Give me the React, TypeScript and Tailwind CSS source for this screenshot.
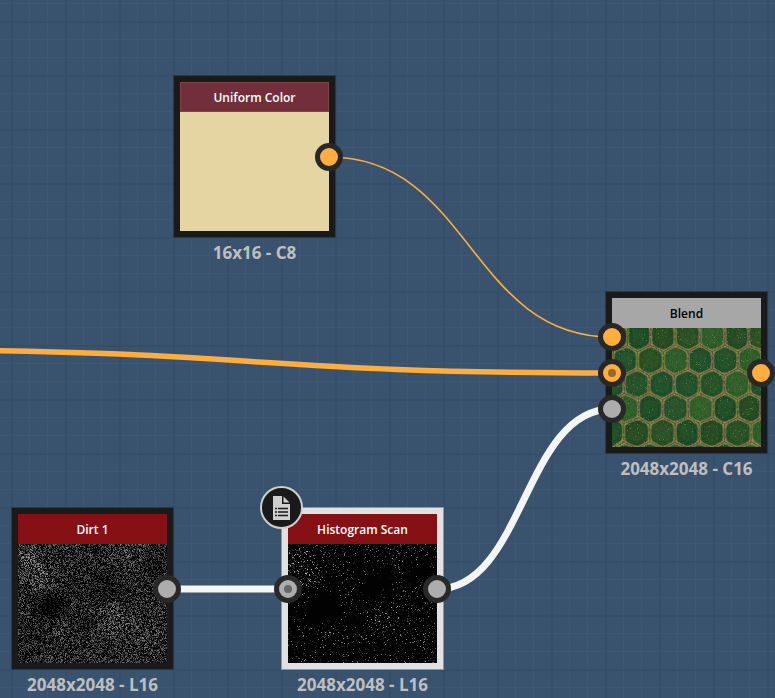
import type { ReactNode } from "react";

type Point = [number, number];

const THUMB = 149;

/* Small deterministic generator so the thumbnails look the same on every render. */
function makeRandom(seed: number) {
  let s = seed;
  return () => {
    s = (s + 0x6d2b79f5) | 0;
    let t = Math.imul(s ^ (s >>> 15), 1 | s);
    t = (t + Math.imul(t ^ (t >>> 7), 61 | t)) ^ t;
    return ((t ^ (t >>> 14)) >>> 0) / 4294967296;
  };
}

/* Cloud blobs: x, y, radius, strength (negative is darker). */
const CLOUDS: [number, number, number, number][] = [
  [8, 45, 18, 0.18],
  [22, 66, 11, 0.25],
  [33, 92, 15, -0.3],
  [96, 104, 15, 0.2],
  [42, 114, 10, 0.14],
  [112, 38, 18, 0.12],
  [128, 122, 14, 0.12],
  [132, 54, 14, -0.14],
  [86, 70, 20, -0.12],
  [64, 110, 12, -0.1],
  [10, 125, 16, -0.08],
];

function cloud(x: number, y: number) {
  let v = 0;
  for (const [cx, cy, r, k] of CLOUDS) {
    const d = ((x - cx) ** 2 + (y - cy) ** 2) / (r * r);
    v += k * Math.exp(-d);
  }
  return v;
}

function grain(seed: number, level: (r: number, q: number, c: number) => number) {
  const rnd = makeRandom(seed);
  const paths: string[] = Array(12).fill("");
  for (let y = 30; y < THUMB; y++) {
    for (let x = 0; x < THUMB; x++) {
      const v = Math.max(0, Math.min(0.99, level(rnd(), rnd(), cloud(x, y))));
      const bin = Math.floor(v * 12);
      if (bin > 0) paths[bin] += `M${x} ${y}h1v1h-1z`;
    }
  }
  return paths;
}

const DIRT = grain(7, (r, _q, c) => Math.pow(r, 2) * (0.46 + c) + c * 0.14);
const SCAN = grain(21, (r, q, c) => (r > 0.9 - c * 0.8 ? 0.09 + Math.pow(q, 2.6) * (0.5 + Math.max(0, c) * 1.5) : 0));

function Grain({ paths }: { paths: string[] }) {
  return (
    <svg className="block size-full" viewBox="0 0 149 149" shapeRendering="crispEdges" aria-hidden="true">
      <rect width="149" height="149" fill="#020202" />
      {paths.map((d, i) => {
        const g = Math.round(((i + 0.4) / 12) * 255);
        return d ? <path key={i} d={d} fill={`rgb(${g},${g},${g})`} /> : null;
      })}
    </svg>
  );
}

/* Scale cells: centres of each row, at three times the thumbnail's scale. */
const ROWS: { y: number; xs: number[] }[] = [
  { y: 40, xs: [30, 92, 166, 240, 315, 390, 465] },
  { y: 116, xs: [13, 80, 152, 227, 302, 375, 445] },
  { y: 186, xs: [-30, 38, 115, 193, 264, 339, 417, 480] },
  { y: 259, xs: [0, 73, 149, 225, 299, 375, 451] },
  { y: 331, xs: [-25, 45, 114, 190, 267, 340, 413, 480] },
  { y: 404, xs: [-3, 73, 153, 226, 297, 378, 457] },
  { y: 480, xs: [38, 114, 190, 264, 338, 415] },
];

const GREENS = ["#26502a", "#305d2c", "#1d4a28", "#214f2a", "#2a4e25", "#33602a", "#204f2e", "#264824"];

function voronoi(site: Point, sites: Point[]): Point[] {
  let poly: Point[] = [[-40, -40], [190, -40], [190, 190], [-40, 190]];
  for (const o of sites) {
    if (o === site) continue;
    const mx = (site[0] + o[0]) / 2;
    const my = (site[1] + o[1]) / 2;
    const dx = o[0] - site[0];
    const dy = o[1] - site[1];
    const side = (p: Point) => (p[0] - mx) * dx + (p[1] - my) * dy;
    const next: Point[] = [];
    poly.forEach((a, i) => {
      const b = poly[(i + 1) % poly.length];
      const sa = side(a);
      const sb = side(b);
      if (sa <= 0) next.push(a);
      if (sa < 0 !== sb < 0) {
        const t = sa / (sa - sb);
        next.push([a[0] + (b[0] - a[0]) * t, a[1] + (b[1] - a[1]) * t]);
      }
    });
    poly = next;
  }
  return poly;
}

function rounded(poly: Point[], c: Point, k: number) {
  const p = poly.map(([x, y]): Point => [c[0] + (x - c[0]) * k, c[1] + (y - c[1]) * k]);
  const mix = (a: Point, b: Point, t: number) =>
    `${(a[0] + (b[0] - a[0]) * t).toFixed(1)} ${(a[1] + (b[1] - a[1]) * t).toFixed(1)}`;
  return (
    p
      .map((v, i) => {
        const prev = p[(i + p.length - 1) % p.length];
        const next = p[(i + 1) % p.length];
        return `${i ? "L" : "M"}${mix(v, prev, 0.25)}Q${v[0].toFixed(1)} ${v[1].toFixed(1)} ${mix(v, next, 0.25)}`;
      })
      .join("") + "Z"
  );
}

const SITES: Point[] = ROWS.flatMap((r) => r.xs.map((x): Point => [x / 3, r.y / 3]));
const CELLS = SITES.map((s, i) => {
  const poly = voronoi(s, SITES);
  return {
    edge: "M" + poly.map((p) => `${p[0].toFixed(1)} ${p[1].toFixed(1)}`).join("L") + "Z",
    body: rounded(poly, s, 0.9),
    core: rounded(poly, s, 0.6),
    fill: GREENS[(i * 5 + (i >> 2)) % GREENS.length],
  };
});

const SPECKS = (() => {
  const rnd = makeRandom(3);
  const out = { dark: "", green: "", light: "" };
  for (let i = 0; i < 6000; i++) {
    const x = Math.floor(rnd() * THUMB);
    const y = 30 + Math.floor(rnd() * 119);
    const r = rnd();
    if (r < 0.55) out.dark += `M${x} ${y}h1v2h-1z`;
    else if (r < 0.95) out.green += `M${x} ${y}h1v1h-1z`;
    else out.light += `M${x} ${y}h1v1h-1z`;
  }
  return out;
})();

function Scales() {
  return (
    <svg className="block size-full" viewBox="0 0 149 149" aria-hidden="true">
      <rect width="149" height="149" fill="#8c8d48" />
      {CELLS.map((c, i) => (
        <g key={i}>
          <path d={c.body} fill={c.fill} stroke="#66793a" strokeWidth="1" />
          <path d={c.core} fill="#3f7a33" opacity="0.14" />
        </g>
      ))}
      {CELLS.map((c, i) => (
        <path key={i} d={c.edge} fill="none" stroke="#64404c" strokeWidth="0.7" strokeDasharray="7 2 4 1" />
      ))}
      <g shapeRendering="crispEdges">
        <path d={SPECKS.dark} fill="#0c2a12" opacity="0.15" />
        <path d={SPECKS.green} fill="#5d8a3c" opacity="0.18" />
        <path d={SPECKS.light} fill="#a9b560" opacity="0.4" />
      </g>
    </svg>
  );
}

type PortKind = "color" | "colorLinked" | "gray" | "grayLinked";

function Port({ kind, label, place }: { kind: PortKind; label: string; place: string }) {
  const color = kind.startsWith("color") ? "bg-[#ffad3f]" : "bg-[#adadad]";
  return (
    <button
      type="button"
      aria-label={label}
      className={`absolute flex size-7 items-center justify-center rounded-full border-5 border-[#282828] ${color} ${place}`}
    >
      {kind === "colorLinked" && <span className="size-2 rounded-full bg-[#99682a]" />}
      {kind === "grayLinked" && <span className="size-2 rounded-full bg-[#666666]" />}
    </button>
  );
}

interface NodeProps {
  title: string;
  caption: string;
  place: string;
  header: string;
  frame?: string;
  children: ReactNode;
  ports: ReactNode;
}

function GraphNode({ title, caption, place, header, frame = "border-[#1a1a1a] ring-[#1a1a1a]/40", children, ports }: NodeProps) {
  return (
    <article className={`absolute flex w-[161px] flex-col items-center ${place}`}>
      <div className={`relative size-[161px] border-6 ring-1 ${frame}`}>
        <div className="size-full">{children}</div>
        <h2 className={`absolute inset-x-0 top-0 flex h-[30px] items-center justify-center border pt-0.5 text-xs font-semibold ${header}`}>
          {title}
        </h2>
        {ports}
      </div>
      <p className="mt-1 text-[17px] leading-6 font-bold whitespace-nowrap text-[#bfbfbf]">{caption}</p>
    </article>
  );
}

function Wires() {
  return (
    <svg className="absolute inset-0 size-full" fill="none" aria-hidden="true">
      <defs>
        <pattern id="grid" x="11" y="21" width="54" height="54" patternUnits="userSpaceOnUse">
          <path d="M18.5 0V54M36.5 0V54M0 18.5H54M0 36.5H54" stroke="#3d5872" />
          <path d="M1 0V54M0 1H54" stroke="#354f6b" strokeWidth="2" />
        </pattern>
      </defs>
      <rect width="100%" height="100%" fill="url(#grid)" />
      <path d="M329 157C470 157 470 337 612 337" stroke="#ffad3f" strokeWidth="1.6" />
      <path d="M-110 350C251 350 251 373 612 373" stroke="#ffad3f" strokeWidth="5.5" />
      <path d="M761 373H800" stroke="#c08a45" strokeWidth="5" />
      <path d="M167 589H288" stroke="#f5f5f5" strokeWidth="7" />
      <path d="M437 589C524 589 524 409 612 409" stroke="#f5f5f5" strokeWidth="7" />
    </svg>
  );
}

export default function App() {
  return (
    <main className="relative h-screen w-full overflow-hidden bg-[#39536f] font-['Open_Sans','Noto_Sans',sans-serif]">
      <Wires />

      <GraphNode
        title="Uniform Color"
        caption="16x16 - C8"
        place="top-[76px] left-[174px]"
        header="border-[#7f4446] bg-[#722f3b] text-white"
        ports={<Port kind="color" label="Uniform Color output" place="top-[61px] -right-3.5" />}
      >
        <div className="size-full bg-[#e4d5a2]" />
      </GraphNode>

      <GraphNode
        title="Blend"
        caption="2048x2048 - C16"
        place="top-[292px] left-[606px]"
        header="border-[#a7a7a7] bg-[#a7a7a7] text-black"
        ports={
          <>
            <Port kind="color" label="Foreground input" place="top-[25px] -left-3.5" />
            <Port kind="colorLinked" label="Background input" place="top-[61px] -left-3.5" />
            <Port kind="gray" label="Opacity input" place="top-[97px] -left-3.5" />
            <Port kind="color" label="Blend output" place="top-[61px] -right-3.5" />
          </>
        }
      >
        <Scales />
      </GraphNode>

      <GraphNode
        title="Dirt 1"
        caption="2048x2048 - L16"
        place="top-[508px] left-[12px]"
        header="border-[#861114] bg-[#861114] text-white"
        ports={<Port kind="gray" label="Dirt 1 output" place="top-[61px] -right-3.5" />}
      >
        <Grain paths={DIRT} />
      </GraphNode>

      <GraphNode
        title="Histogram Scan"
        caption="2048x2048 - L16"
        place="top-[508px] left-[282px]"
        frame="border-[#e1e1e1] ring-[#e1e1e1]/50"
        header="border-[#861114] bg-[#861114] text-white"
        ports={
          <>
            <Port kind="grayLinked" label="Histogram Scan input" place="top-[61px] -left-3.5" />
            <Port kind="gray" label="Histogram Scan output" place="top-[61px] -right-3.5" />
            <button
              type="button"
              aria-label="Node notes"
              className="absolute -top-7 -left-7 flex size-[43px] items-center justify-center rounded-full border-2 border-[#cfcfcf] bg-[#1a1a1a]"
            >
              <svg width="17" height="24" viewBox="0 0 17 24" aria-hidden="true">
                <path d="M0 0H9V8H17V24H0Z" fill="#cfcfcf" />
                <path d="M10.5 0.5L16.5 6.5H10.5Z" fill="#cfcfcf" />
                <path d="M2 12.5H4M5 12.5H15M2 16H4M5 16H15M2 19.5H4M5 19.5H15" stroke="#1a1a1a" strokeWidth="1.5" />
              </svg>
            </button>
          </>
        }
      >
        <Grain paths={SCAN} />
      </GraphNode>
    </main>
  );
}
